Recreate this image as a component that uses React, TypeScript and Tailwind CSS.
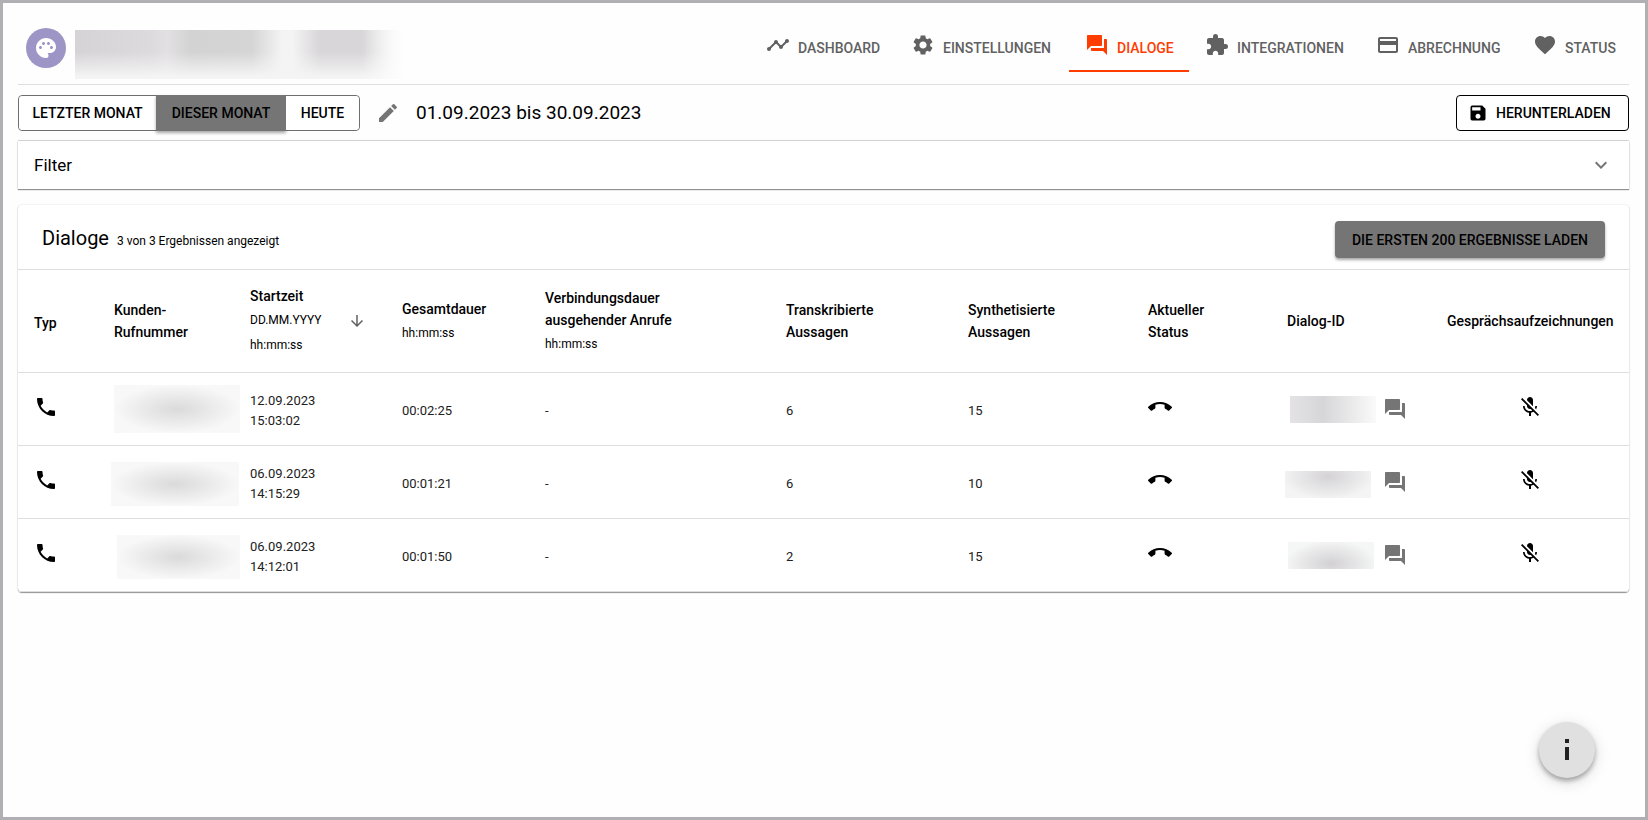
import type { ReactNode } from 'react'
import type { IconType } from 'react-icons'
import clsx from 'clsx'
import {
  MdArrowDownward,
  MdCallEnd,
  MdCreditCard,
  MdEdit,
  MdExpandMore,
  MdExtension,
  MdFavorite,
  MdForum,
  MdMicOff,
  MdPalette,
  MdPhone,
  MdSave,
  MdSettings,
  MdTimeline,
} from 'react-icons/md'

type Tab = { label: string; icon: IconType; width: string; active?: boolean }

const tabs: Tab[] = [
  { label: 'Dashboard', icon: MdTimeline, width: 'w-[145px]' },
  { label: 'Einstellungen', icon: MdSettings, width: 'w-[174px]' },
  { label: 'Dialoge', icon: MdForum, width: 'w-[120px]', active: true },
  { label: 'Integrationen', icon: MdExtension, width: 'w-[171px]' },
  { label: 'Abrechnung', icon: MdCreditCard, width: 'w-[157px]' },
  { label: 'Status', icon: MdFavorite, width: 'w-[112px]' },
]

const rows = [
  {
    date: '12.09.2023',
    time: '15:03:02',
    duration: '00:02:25',
    transcribed: 6,
    synthesized: 15,
    phoneMask: 'w-[126px] h-12',
    idMask: 'ml-[3px] bg-[linear-gradient(90deg,#e4e2e4,#d6d6d8_38%,#fafafa)]',
  },
  {
    date: '06.09.2023',
    time: '14:15:29',
    duration: '00:01:21',
    transcribed: 6,
    synthesized: 10,
    phoneMask: '-ml-[3px] mt-1 w-[128px] h-11',
    idMask: '-ml-0.5 mt-1 bg-[radial-gradient(ellipse_at_50%_20%,#d4d2d5,#f4f4f4_75%)]',
  },
  {
    date: '06.09.2023',
    time: '14:12:01',
    duration: '00:01:50',
    transcribed: 2,
    synthesized: 15,
    phoneMask: 'ml-[3px] mt-1 w-[123px] h-11',
    idMask: 'ml-px bg-[radial-gradient(ellipse_at_50%_80%,#d2d0d3,#f5f6f6_75%)]',
  },
]

function NavTab({ label, icon: Icon, width, active }: Tab) {
  return (
    <a
      href="#"
      aria-current={active ? 'page' : undefined}
      className={clsx(
        'flex h-12 items-center gap-2 border-b-2 px-4 pt-0.5 text-sm font-medium uppercase whitespace-nowrap',
        width,
        active ? 'border-[#ff3d00] text-[#ff3d00]' : 'border-transparent text-[#616161]'
      )}
    >
      <Icon className="mb-1.5 size-6 shrink-0" />
      {label}
    </a>
  )
}

function HeadCell({ children, className }: { children: ReactNode; className?: string }) {
  return (
    <th scope="col" className={clsx('pl-4 text-left align-middle text-sm leading-[22px] font-medium', className)}>
      {children}
    </th>
  )
}

function Unit({ children }: { children: ReactNode }) {
  return <span className="block pt-px text-xs leading-6 font-normal">{children}</span>
}

export default function App() {
  return (
    <div className="min-h-screen border-3 border-[#b0b0b2] bg-[#fefefe] pr-4 pl-[15px] font-['Roboto','Liberation_Sans',sans-serif] text-black">
      <header className="flex h-[82px] items-center justify-between border-b border-[#dedede] pt-2">
        <div className="flex items-center gap-[9px] pl-2">
          <div className="flex size-10 items-center justify-center rounded-full bg-[#9d95c5] text-white">
            <MdPalette className="size-6" />
          </div>
          <div
            aria-hidden="true"
            className="mt-3.5 h-[49px] w-[340px] bg-[linear-gradient(90deg,transparent_85%,#fefefe_97%),linear-gradient(180deg,transparent_45%,#f4f4f4_95%),linear-gradient(90deg,#d6d3d6,#dcdadc_22%,#e2e0e2_27%,#d4d3d4_34%,#d6d5d6_52%,#f4f4f4_61%,#f4f4f4_64%,#d8d6d8_72%,#d8d6d8_84%,#f0f0f0_94%)]"
          />
        </div>
        <nav className="flex">
          {tabs.map((tab) => (
            <NavTab key={tab.label} {...tab} />
          ))}
        </nav>
      </header>

      <div className="flex h-14 items-center justify-between border-b border-[#dedede]">
        <div className="flex items-center">
          <div className="flex h-9 rounded border border-[#6f6f6f] text-sm font-medium">
            <button className="w-[137px] rounded-l bg-white uppercase">Letzter Monat</button>
            <button className="-my-px w-[130px] bg-[#757575] uppercase shadow-[0_2px_3px_rgba(0,0,0,0.35)]">
              Dieser Monat
            </button>
            <button className="w-[73px] rounded-r bg-white uppercase">Heute</button>
          </div>
          <button aria-label="Zeitraum bearbeiten" className="ml-4 text-[#757575]">
            <MdEdit className="size-6" />
          </button>
          <p className="ml-4 pt-0.5 text-[19px]">01.09.2023 bis 30.09.2023</p>
        </div>
        <button className="flex h-9 w-[173px] items-center gap-2 rounded border border-black bg-white pl-[11px] text-sm font-medium uppercase">
          <MdSave className="size-5" />
          Herunterladen
        </button>
      </div>

      <button
        aria-expanded="false"
        className="flex h-12 w-full items-center justify-between bg-white px-4 text-[17px] shadow-[0_1px_1px_rgba(0,0,0,0.4),0_0_2px_rgba(0,0,0,0.15)]"
      >
        <span className="pt-0.5">Filter</span>
        <MdExpandMore className="size-6 text-[#757575]" />
      </button>

      <section className="mt-4 rounded bg-white shadow-[0_1px_1px_rgba(0,0,0,0.4),0_0_2px_rgba(0,0,0,0.15)]">
        <div className="flex h-16 items-center justify-between px-6">
          <div className="flex items-baseline gap-2 pt-0.5">
            <h2 className="text-xl">Dialoge</h2>
            <span className="text-xs">3 von 3 Ergebnissen angezeigt</span>
          </div>
          <button className="mt-1 h-[37px] w-[270px] rounded bg-[#757575] pt-0.5 text-sm font-medium uppercase shadow-[0_2px_3px_rgba(0,0,0,0.35)]">
            Die ersten 200 Ergebnisse laden
          </button>
        </div>

        <table className="w-full table-fixed">
          <colgroup>
            <col className="w-[80px]" />
            <col className="w-[136px]" />
            <col className="w-[152px]" />
            <col className="w-[143px]" />
            <col className="w-[241px]" />
            <col className="w-[182px]" />
            <col className="w-[180px]" />
            <col className="w-[139px]" />
            <col className="w-[160px]" />
            <col />
          </colgroup>
          <thead>
            <tr className="h-[103px] border-y border-[#dedede]">
              <HeadCell className="pt-1">Typ</HeadCell>
              <HeadCell>Kunden-<br />Rufnummer</HeadCell>
              <HeadCell>
                <div className="flex items-center justify-between pr-5">
                  <div>
                    Startzeit
                    <Unit>DD.MM.YYYY</Unit>
                    <Unit>hh:mm:ss</Unit>
                  </div>
                  <MdArrowDownward className="size-[18px] text-[#616161]" />
                </div>
              </HeadCell>
              <HeadCell>
                Gesamtdauer
                <Unit>hh:mm:ss</Unit>
              </HeadCell>
              <HeadCell>
                Verbindungsdauer<br />ausgehender Anrufe
                <Unit>hh:mm:ss</Unit>
              </HeadCell>
              <HeadCell>Transkribierte<br />Aussagen</HeadCell>
              <HeadCell>Synthetisierte<br />Aussagen</HeadCell>
              <HeadCell>Aktueller<br />Status</HeadCell>
              <HeadCell>Dialog-ID</HeadCell>
              <HeadCell className="pr-4 text-center whitespace-nowrap">Gesprächsaufzeichnungen</HeadCell>
            </tr>
          </thead>
          <tbody className="text-[13px] text-[#212121]">
            {rows.map((row) => (
              <tr key={row.time} className="h-[73px] border-b border-[#dedede]">
                <td className="pl-4 text-black">
                  <MdPhone className="mb-1 size-6" />
                </td>
                <td className="pl-4">
                  <div
                    aria-hidden="true"
                    className={clsx('bg-[radial-gradient(ellipse_closest-side,#dbdadb,#f8f8f8)]', row.phoneMask)}
                  />
                </td>
                <td className="pt-1 pl-4 leading-5">
                  {row.date}
                  <br />
                  {row.time}
                </td>
                <td className="pt-1 pl-4">{row.duration}</td>
                <td className="pt-1 pl-4">-</td>
                <td className="pt-1 pl-4">{row.transcribed}</td>
                <td className="pt-1 pl-4">{row.synthesized}</td>
                <td className="pl-4 text-black">
                  <MdCallEnd className="mb-1 size-6" />
                </td>
                <td className="pl-4">
                  <div className="flex items-center justify-between pr-6">
                    <div aria-hidden="true" className={clsx('h-[27px] w-[86px]', row.idMask)} />
                    <button aria-label="Dialog anzeigen" className="text-[#757575]">
                      <MdForum className="size-6" />
                    </button>
                  </div>
                </td>
                <td className="pr-4 pl-4 text-black">
                  <MdMicOff className="mx-auto mb-1 size-6" />
                </td>
              </tr>
            ))}
          </tbody>
        </table>
      </section>

      <button
        aria-label="Information"
        className="fixed right-[53px] bottom-[42px] flex size-14 items-center justify-center rounded-full bg-[#e0e0e0] shadow-[0_3px_5px_rgba(0,0,0,0.3),0_4px_16px_rgba(0,0,0,0.15)]"
      >
        <svg viewBox="0 0 24 24" className="size-6" fill="#212121" aria-hidden="true">
          <path d="M10 1h4v4h-4zM10 9h4v13h-4z" />
        </svg>
      </button>
    </div>
  )
}
